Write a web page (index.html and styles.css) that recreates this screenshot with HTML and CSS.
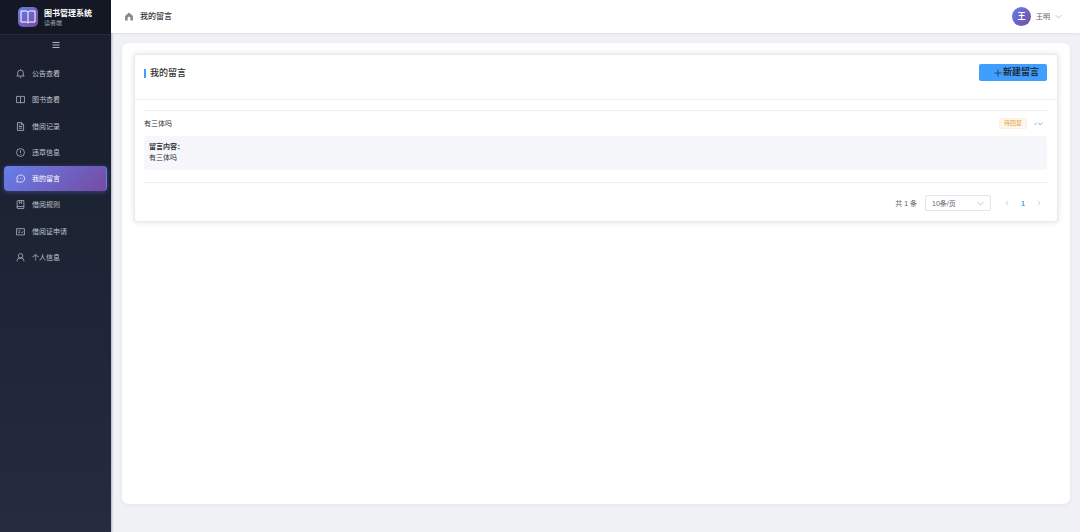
FILE: index.html
```html
<!DOCTYPE html>
<html lang="zh-CN">
<head>
<meta charset="utf-8">
<meta name="viewport" content="width=device-width, initial-scale=1">
<title>我的留言 - 图书管理系统</title>
<link rel="stylesheet" href="styles.css">
</head>
<body>
<div class="layout">
  <aside class="sidebar">
    <div class="brand">
      <span class="brand-logo">
        <svg viewBox="0 0 16 14"><path d="M8 2v11M1 1h5.500L8 2l1.500-1H15v11H9.500L8 13l-1.500-1H1z"/></svg>
      </span>
      <span class="brand-text">
        <strong class="brand-name">图书管理系统</strong>
        <span class="brand-role">读者端</span>
      </span>
    </div>
    <button class="collapse" type="button" aria-label="折叠菜单">
      <svg viewBox="0 0 16 16"><path d="M1 3h14M1 8h14M1 13h14"/></svg>
    </button>
    <nav class="menu">
      <a class="menu-item" href="#"><svg class="icon" viewBox="0 0 16 16"><path d="M1 12.500h14M3 12.500V7a5 5 0 0 1 10 0v5.500M8 2V.8M6.500 14.800h3"/></svg>公告查看</a>
      <a class="menu-item" href="#"><svg class="icon" viewBox="0 0 16 16"><path d="M8 3v11M1 2.500h6l1 .5 1-.5h6v11H9l-1 .5-1-.5H1z"/></svg>图书查看</a>
      <a class="menu-item" href="#"><svg class="icon" viewBox="0 0 16 16"><path d="M2.500 1h7.500l3.500 3.500V15h-11zM9.500 1v4h4M5 5h2M5 8h6M5 11h6"/></svg>借阅记录</a>
      <a class="menu-item" href="#"><svg class="icon" viewBox="0 0 16 16"><circle cx="8" cy="8" r="7"/><path d="M8 4v5M8 11v1.200"/></svg>违章信息</a>
      <a class="menu-item active" href="#" aria-current="page"><svg class="icon" viewBox="0 0 16 16"><path d="M1.500 14.500l.8-3.200A7 6.500 0 1 1 5 13.800zM4.500 8h1M7.500 8h1M10.500 8h1"/></svg>我的留言</a>
      <a class="menu-item" href="#"><svg class="icon" viewBox="0 0 16 16"><path d="M14 11.500V1H3.500A1.500 1.500 0 0 0 2 2.500V13a1.500 1.500 0 0 0 1.500 2H14M2 13a1.500 1.500 0 0 1 1.500-1.500H14V15M6 1v5l2-1.500L10 6V1"/></svg>借阅规则</a>
      <a class="menu-item" href="#"><svg class="icon" viewBox="0 0 16 16"><path d="M1 3h14v11H1zM4 7h4M4 10h3M9.500 9l1.200 1.200L13 7.500"/></svg>借阅证申请</a>
      <a class="menu-item" href="#"><svg class="icon" viewBox="0 0 16 16"><circle cx="8" cy="5" r="4"/><path d="M2 15v-1.500a4.500 4.500 0 0 1 4-4.500h4a4.500 4.500 0 0 1 4 4.500V15"/></svg>个人信息</a>
    </nav>
  </aside>

  <div class="content">
    <header class="topbar">
      <div class="crumbs">
        <svg class="home" viewBox="0 0 16 16"><path d="M8 1 1 7v8h4.500v-4a2.500 2.500 0 0 1 5 0v4H15V7z"/></svg>
        <span>我的留言</span>
      </div>
      <button class="user" type="button">
        <span class="avatar">王</span>
        <span>王明</span>
        <svg class="chevron" viewBox="0 0 16 16"><path d="M1 5l7 6 7-6"/></svg>
      </button>
    </header>

    <main class="page">
      <section class="card">
        <div class="card-head">
          <h1 class="card-title">我的留言</h1>
          <button class="create" type="button">
            <svg viewBox="0 0 16 16"><path d="M8 1v14M1 8h14"/></svg>新建留言
          </button>
        </div>
        <div class="card-body">
          <article class="message">
            <button class="message-head" type="button" aria-expanded="true">
              <span>有三体吗</span>
              <span class="message-state">
                <span class="tag">待回复</span>
                <svg class="toggle" viewBox="0 0 20 12"><path d="M3 6h4M10 3l4.500 5L19 3"/></svg>
              </span>
            </button>
            <div class="message-content">
              <strong>留言内容：</strong>
              <p>有三体吗</p>
            </div>
          </article>
          <div class="pagination">
            <label for="page-size">共 1 条</label>
            <span class="select">
              <select id="page-size"><option>10条/页</option><option>20条/页</option></select>
              <svg class="chevron" viewBox="0 0 16 16"><path d="M1 5l7 6 7-6"/></svg>
            </span>
            <span class="pager">
              <button type="button" aria-label="上一页" disabled><svg viewBox="0 0 16 16"><path d="M11 2L5 8l6 6"/></svg></button>
              <button type="button" class="current" aria-current="page">1</button>
              <button type="button" aria-label="下一页" disabled><svg viewBox="0 0 16 16"><path d="M5 2l6 6-6 6"/></svg></button>
            </span>
          </div>
        </div>
      </section>
    </main>
  </div>
</div>
</body>
</html>
```

FILE: styles.css
```css
* {
  box-sizing: border-box;
}

body {
  margin: 0;
  font: 7px/11px "Liberation Sans", "Noto Sans CJK SC", sans-serif;
  color: #303133;
  background: #eff1f5;
}

button,
select {
  margin: 0;
  padding: 0;
  border: 0;
  background: none;
  font: inherit;
  color: inherit;
}

svg {
  display: block;
  flex: none;
  fill: none;
  stroke: currentColor;
}

.layout {
  display: flex;
  min-height: 100vh;
}

/* Sidebar */
.sidebar {
  flex: none;
  width: 111px;
  background: linear-gradient(180deg, #1a1d2d, #1c2333 40%, #262b3f);
  box-shadow: 1px 0 2px rgba(20, 25, 60, 0.3);
}

.brand {
  display: flex;
  align-items: center;
  gap: 6px;
  height: 35px;
  padding-left: 18px;
  background: #141824;
  border-bottom: 1px solid #242838;
}

.brand-logo {
  display: grid;
  place-items: center;
  width: 20px;
  height: 20px;
  border-radius: 5px;
  color: #fff;
  background: linear-gradient(135deg, #667eea, #764ba2);
}

.brand-logo svg {
  width: 16px;
  height: 14px;
}

.brand-text {
  display: flex;
  flex-direction: column;
  padding-top: 2px;
}

.brand-name {
  font-size: 8px;
  line-height: 11px;
  color: #fff;
}

.brand-role {
  font-size: 6px;
  line-height: 9px;
  color: #a3a6ae;
}

.collapse {
  display: grid;
  place-items: center;
  width: 100%;
  height: 20px;
  color: #b4b7c0;
}

.collapse svg {
  width: 8px;
  height: 8px;
  stroke-width: 2;
}

.menu {
  display: flex;
  flex-direction: column;
  justify-content: space-between;
  min-height: 209px;
  margin: 6px 4px 0;
}

.menu-item {
  display: flex;
  align-items: center;
  gap: 7px;
  height: 25px;
  padding-left: 12px;
  border-radius: 4px;
  color: #bfc3cc;
  text-decoration: none;
}

.menu-item.active {
  color: #fff;
  background: linear-gradient(135deg, #667eea, #764ba2);
  border-right: 1px solid #5a86e8;
  box-shadow: 0 1px 5px rgba(102, 126, 234, 0.4);
}

.icon {
  width: 9px;
  height: 9px;
  stroke-width: 1.3;
}

/* Content */
.content {
  display: flex;
  flex: 1;
  flex-direction: column;
  min-width: 0;
}

.topbar {
  display: flex;
  align-items: center;
  justify-content: space-between;
  height: 33px;
  padding: 0 18px 0 13px;
  background: #fff;
  box-shadow: 0 1px 2px rgba(0, 0, 0, 0.08);
}

.crumbs {
  display: flex;
  align-items: center;
  gap: 6px;
  font-size: 8px;
  font-weight: 500;
}

.home {
  width: 10px;
  height: 9px;
  fill: #85888e;
  stroke: none;
}

.user {
  display: flex;
  align-items: center;
  gap: 5px;
  color: #606266;
}

.avatar {
  display: grid;
  place-items: center;
  width: 19px;
  height: 19px;
  border-radius: 50%;
  font-size: 8px;
  font-weight: 700;
  color: #fff;
  background: linear-gradient(135deg, #667eea, #764ba2);
}

.chevron {
  width: 7px;
  height: 7px;
  color: #a8abb2;
  stroke-width: 1.5;
}

.page {
  flex: 1;
  margin: 10px 10px 28px 11px;
  padding: 11px 12px;
  border-radius: 7px;
  background: #fff;
  box-shadow: 0 1px 4px rgba(0, 0, 0, 0.05);
}

.card {
  border: 1px solid #e8eaee;
  border-radius: 3px;
  background: #fff;
  box-shadow: 0 0 6px rgba(0, 0, 0, 0.12);
}

.card-head {
  display: flex;
  align-items: flex-start;
  justify-content: space-between;
  height: 45px;
  padding: 9px 10px 9px 9px;
  border-bottom: 1px solid #ebeef5;
}

.card-title {
  display: flex;
  align-items: center;
  gap: 4px;
  margin: 0;
  font-size: 9px;
  font-weight: 500;
  line-height: 18px;
}

.card-title::before {
  content: "";
  width: 2px;
  height: 9px;
  background: #409eff;
}

.create {
  display: flex;
  align-items: center;
  gap: 1px;
  height: 17px;
  padding: 0 8px 0 15px;
  border-radius: 2px;
  font-size: 9px;
  font-weight: 700;
  color: #1f2d3d;
  background: #409eff;
}

.create svg {
  width: 8px;
  height: 8px;
  stroke-width: 1.5;
}

.card-body {
  padding: 10px 10px 10px 9px;
}

.message {
  padding-bottom: 12px;
  border-top: 1px solid #ebeef5;
  border-bottom: 1px solid #ebeef5;
}

.message-head {
  display: flex;
  align-items: center;
  justify-content: space-between;
  width: 100%;
  height: 25px;
  padding-right: 4px;
}

.message-state {
  display: flex;
  align-items: center;
  gap: 6px;
}

.tag {
  padding: 0 4px;
  border: 1px solid #fcf1e2;
  border-radius: 2px;
  font-size: 6px;
  line-height: 9px;
  color: #e6a23c;
  background: #fdf6ec;
}

.toggle {
  width: 10px;
  height: 6px;
  color: #909399;
  stroke-width: 1.5;
}

.message-content {
  padding: 5px 5px 7px;
  border-radius: 2px;
  background: #f5f7fa;
}

.message-content strong {
  display: block;
}

.message-content p {
  margin: 0;
}

.pagination {
  display: flex;
  align-items: center;
  justify-content: flex-end;
  gap: 8px;
  margin-top: 12px;
  color: #606266;
}

.select {
  display: grid;
  align-items: center;
  width: 66px;
  height: 16px;
  border: 1px solid #e2e5ea;
  border-radius: 2px;
}

.select > * {
  grid-area: 1 / 1;
}

.select select {
  width: 100%;
  padding-left: 6px;
  appearance: none;
}

.select .chevron {
  justify-self: end;
  margin-right: 6px;
  pointer-events: none;
}

.pager {
  display: flex;
}

.pager button {
  display: grid;
  place-items: center;
  width: 16px;
  height: 16px;
  color: #a8abb2;
}

.pager svg {
  width: 6px;
  height: 6px;
  stroke-width: 1.5;
}

.pager .current {
  font-weight: 700;
  color: #409eff;
}
```
